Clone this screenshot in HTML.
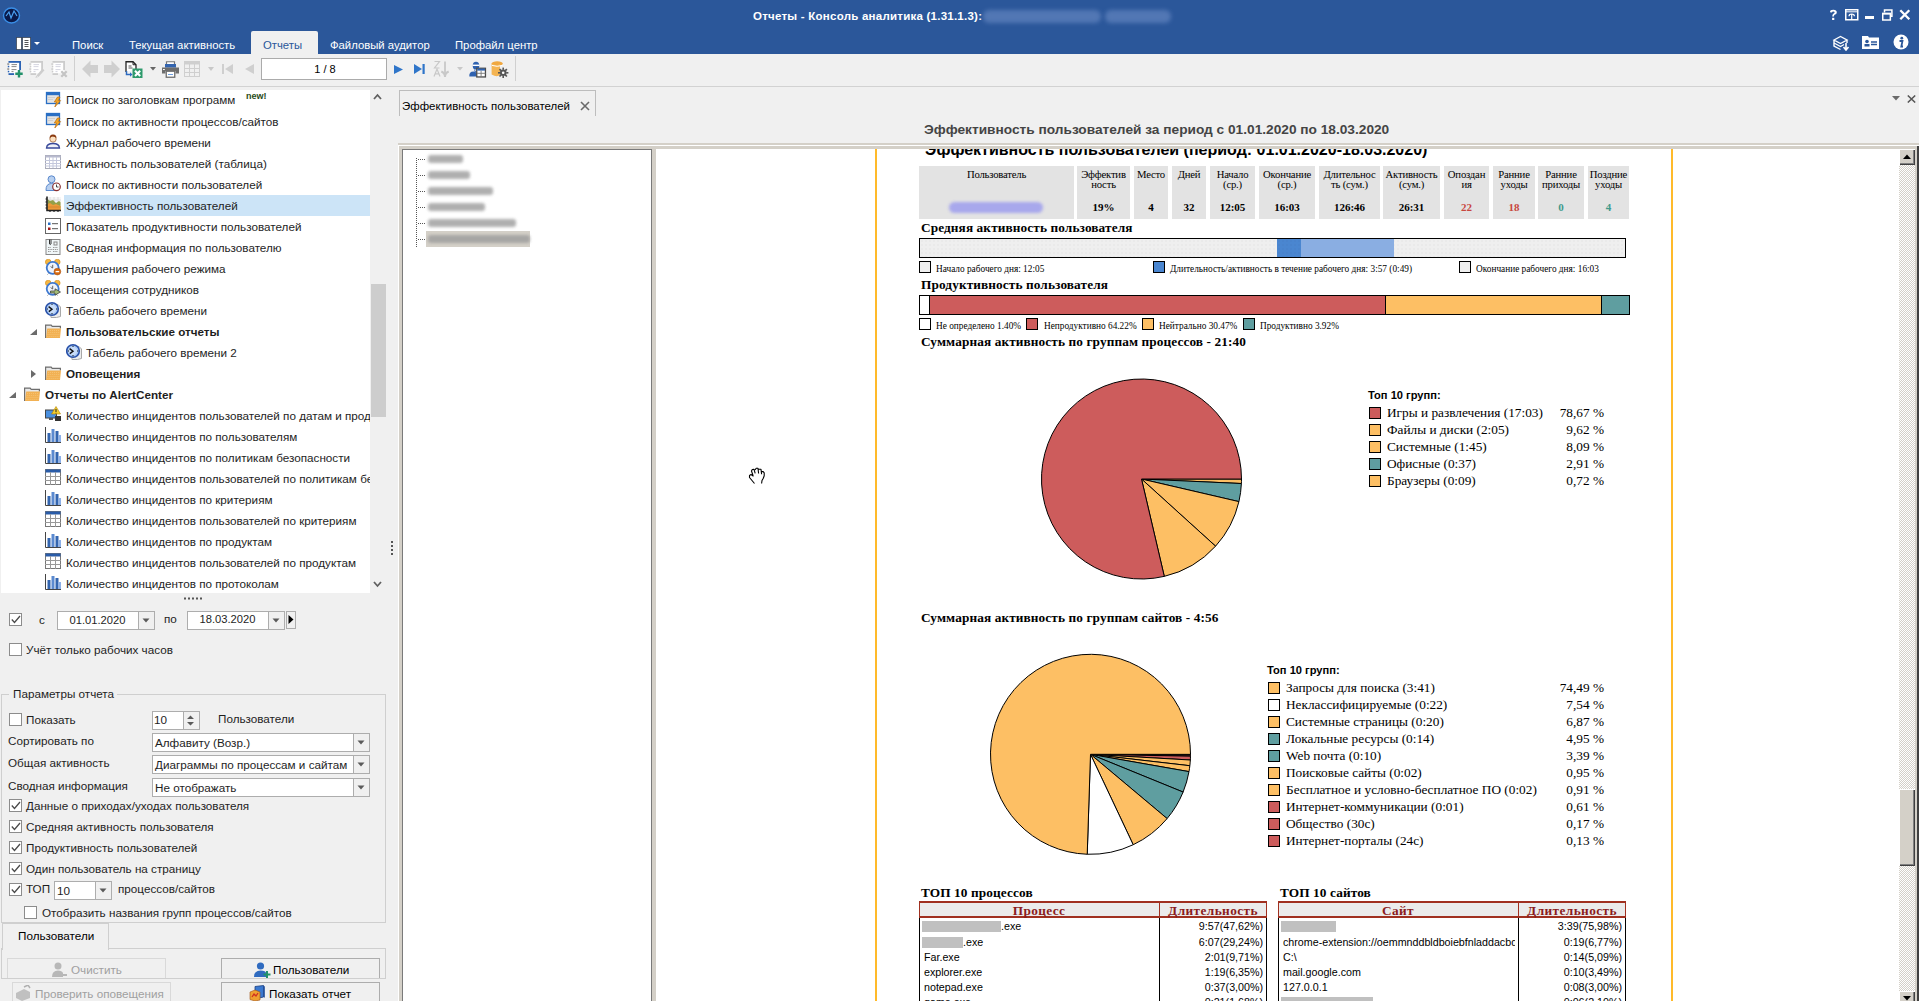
<!DOCTYPE html><html><head><meta charset="utf-8"><style>
html,body{margin:0;padding:0;width:1919px;height:1001px;overflow:hidden;background:#f0f0f0;}
body{position:relative;font-family:"Liberation Sans",sans-serif;}
div{position:absolute;white-space:pre;}
.ui{font-size:11.7px;line-height:14px;color:#1e1e1e;}
.mn{font-size:11.3px;line-height:14px;color:#fff;}
.sf{font-family:"Liberation Serif",serif;}
</style></head><body>
<div style="left:0px;top:0px;width:1919px;height:54px;background:#2b579a"></div><svg style="position:absolute;left:2px;top:7px;" width="19" height="17" viewBox="0 0 19 17"><ellipse cx="9.5" cy="8.5" rx="8" ry="7.5" fill="#0a1a4a" stroke="#3a8ee6" stroke-width="1.4"/><path d="M4 9 L7 5 L9 11 L12 4 L15 9" stroke="#4aa0f0" stroke-width="1.2" fill="none"/></svg><div style="left:753px;top:9px;font-size:11.5px;font-weight:bold;color:#fff;line-height:15px;letter-spacing:0.24px">Отчеты - Консоль аналитика (1.31.1.3):</div><div style="left:983px;top:10px;width:118px;height:13px;background:#5f82bd;border-radius:6px;filter:blur(2px);opacity:.75"></div><div style="left:1105px;top:10px;width:66px;height:13px;background:#5f82bd;border-radius:6px;filter:blur(2px);opacity:.75"></div><svg style="position:absolute;left:1829px;top:9px;" width="9" height="12" viewBox="0 0 9 12"><path d="M1 3.2 Q1 0.8 4.3 0.8 Q7.8 0.8 7.8 3.4 Q7.8 5 5.6 5.8 Q5 6.1 5 7.6 H3.2 Q3.2 5.4 4.6 4.6 Q5.6 4.1 5.6 3.3 Q5.6 2.4 4.3 2.4 Q3 2.4 3 3.6 Z" fill="#fff"/><rect x="3.1" y="8.8" width="2.2" height="2.2" fill="#fff"/></svg><svg style="position:absolute;left:1845px;top:9px;" width="14" height="12" viewBox="0 0 14 12"><rect x="0.75" y="0.75" width="12" height="10" stroke="#fff" stroke-width="1.5" fill="none"/><path d="M1 2.8 H13" stroke="#fff" stroke-width="1"/><path d="M4 7.2 Q4 5 6.7 5 Q9.4 5 9.4 7.2 M6.7 5 V11" stroke="#fff" stroke-width="1.2" fill="none"/></svg><div style="left:1865px;top:16px;width:9px;height:3px;background:#fff"></div><svg style="position:absolute;left:1882px;top:9px;" width="11" height="12" viewBox="0 0 11 12"><path d="M2.5 3.5 V0.9 H9.9 V7.2 H8.3" stroke="#fff" stroke-width="1.5" fill="none"/><rect x="0.75" y="4.4" width="7.6" height="6.6" stroke="#fff" stroke-width="1.5" fill="none"/><path d="M0.75 5 H8.3" stroke="#fff" stroke-width="1.2"/></svg><svg style="position:absolute;left:1899px;top:9px;" width="12" height="12" viewBox="0 0 12 12"><path d="M1.3 1.3 L10.3 10.3 M10.3 1.3 L1.3 10.3" stroke="#fff" stroke-width="2.3"/></svg><svg style="position:absolute;left:16px;top:37px;" width="25" height="13" viewBox="0 0 25 13"><rect x="0.5" y="0.5" width="5" height="12" fill="#fff" stroke="#111" stroke-dasharray="1 1"/><rect x="6.5" y="0.5" width="8" height="12" fill="#fff" stroke="#111" stroke-dasharray="1 1"/><path d="M8.5 3.5 H12.5 M8.5 5.5 H12.5 M8.5 7.5 H12.5 M8.5 9.5 H12.5" stroke="#555"/><path d="M18 5 L24 5 L21 8 Z" fill="#fff"/></svg><div style="left:251px;top:31px;width:67px;height:24px;background:#f0f0f0;border-radius:2px 2px 0 0"></div><div class="mn" style="left:72px;top:38px;color:#fff">Поиск</div><div class="mn" style="left:129px;top:38px;color:#fff">Текущая активность</div><div class="mn" style="left:263px;top:38px;color:#2b579a">Отчеты</div><div class="mn" style="left:330px;top:38px;color:#fff">Файловый аудитор</div><div class="mn" style="left:455px;top:38px;color:#fff">Профайл центр</div><svg style="position:absolute;left:1832px;top:34px;" width="18" height="17" viewBox="0 0 18 17"><path d="M2 6 L8.5 2.5 L15 6 L8.5 9.5 Z M2 6 V12 L8.5 15.5 M15 6 V9" stroke="#fff" stroke-width="1.4" fill="none"/><path d="M2 9 L8.5 12.5 L12 10.5" stroke="#fff" stroke-width="1.2" fill="none"/><path d="M14 9 V15 M11.5 13 L14 16 L16.5 13" stroke="#fff" stroke-width="1.6" fill="none"/></svg><svg style="position:absolute;left:1862px;top:36px;" width="17" height="13" viewBox="0 0 17 13"><path d="M0 0 H6 L7 1.5 H17 V13 H0 Z" fill="#fff"/><circle cx="5" cy="5.5" r="1.8" fill="#2b579a"/><rect x="2.5" y="8" width="5" height="2.5" fill="#2b579a"/><path d="M9 6 H15 M9 8.5 H15" stroke="#2b579a" stroke-width="1.3"/></svg><svg style="position:absolute;left:1893px;top:34px;" width="16" height="16" viewBox="0 0 16 16"><circle cx="8" cy="8" r="7.5" fill="#fff"/><circle cx="8.8" cy="4.2" r="1.4" fill="#2b579a"/><path d="M6.5 7 H9.5 L8.3 12.5 H10" stroke="#2b579a" stroke-width="1.8" fill="none"/></svg><div style="left:0px;top:86px;width:1919px;height:1px;background:#d2d2d2"></div><svg style="position:absolute;left:7px;top:61px;" width="17" height="17" viewBox="0 0 17 17"><rect x="2" y="1.2" width="10.5" height="11" fill="#fff"/><rect x="1.5" y="0" width="12.5" height="1.8" fill="#2a62b4"/><rect x="12.2" y="0" width="1.8" height="9" fill="#2a62b4"/><rect x="1.5" y="12.2" width="5.5" height="1.8" fill="#2a62b4"/><rect x="0.3" y="2.3" width="2" height="1.5" fill="#8a8a8a"/><rect x="0.8" y="4.8" width="1.5" height="1.5" fill="#2a62b4"/><rect x="0.3" y="7.3" width="2" height="1.5" fill="#8a8a8a"/><rect x="0.8" y="9.8" width="1.5" height="1.5" fill="#2a62b4"/><path d="M4.5 3.6 H10 M4.5 5.6 H9.5 M4.5 8.6 H9.5 M4.5 10.6 H6.5" stroke="#8a8a8a" stroke-width="1"/><path d="M12 9 V16.5 M8.3 12.8 H15.7" stroke="#22916a" stroke-width="2.4"/></svg><svg style="position:absolute;left:29px;top:61px;" width="17" height="17" viewBox="0 0 17 17"><rect x="2" y="1.2" width="10.5" height="11" fill="#fff"/><rect x="1.5" y="0" width="12.5" height="1.8" fill="#cccccc"/><rect x="12.2" y="0" width="1.8" height="9" fill="#cccccc"/><rect x="1.5" y="12.2" width="5.5" height="1.8" fill="#cccccc"/><rect x="0.3" y="2.3" width="2" height="1.5" fill="#cccccc"/><rect x="0.8" y="4.8" width="1.5" height="1.5" fill="#cccccc"/><rect x="0.3" y="7.3" width="2" height="1.5" fill="#cccccc"/><rect x="0.8" y="9.8" width="1.5" height="1.5" fill="#cccccc"/><path d="M4.5 3.6 H10 M4.5 5.6 H9.5 M4.5 8.6 H9.5 M4.5 10.6 H6.5" stroke="#d6d6e0" stroke-width="1"/><path d="M7.5 14.5 L13.5 7.5 L15.5 9.3 L9.5 16 Z" fill="#cdcdcd"/><path d="M6.3 16.8 L7.3 14.7 L9 16.2 Z" fill="#cdcdcd"/></svg><svg style="position:absolute;left:51px;top:61px;" width="17" height="17" viewBox="0 0 17 17"><rect x="2" y="1.2" width="10.5" height="11" fill="#fff"/><rect x="1.5" y="0" width="12.5" height="1.8" fill="#cccccc"/><rect x="12.2" y="0" width="1.8" height="9" fill="#cccccc"/><rect x="1.5" y="12.2" width="5.5" height="1.8" fill="#cccccc"/><rect x="0.3" y="2.3" width="2" height="1.5" fill="#cccccc"/><rect x="0.8" y="4.8" width="1.5" height="1.5" fill="#cccccc"/><rect x="0.3" y="7.3" width="2" height="1.5" fill="#cccccc"/><rect x="0.8" y="9.8" width="1.5" height="1.5" fill="#cccccc"/><path d="M4.5 3.6 H10 M4.5 5.6 H9.5 M4.5 8.6 H9.5 M4.5 10.6 H6.5" stroke="#d6d6e0" stroke-width="1"/><path d="M10.3 10.3 L15.7 15.7 M15.7 10.3 L10.3 15.7" stroke="#c4c4c4" stroke-width="2.2"/></svg><div style="left:74px;top:56px;width:1px;height:25px;background:#d0d0d0"></div><svg style="position:absolute;left:82px;top:60px;" width="16" height="18" viewBox="0 0 16 18"><path d="M0 9 L8.5 0.5 V5 H16 V13 H8.5 V17.5 Z" fill="#cfcfcf"/></svg><svg style="position:absolute;left:104px;top:60px;" width="16" height="18" viewBox="0 0 16 18"><path d="M16 9 L7.5 0.5 V5 H0 V13 H7.5 V17.5 Z" fill="#cfcfcf"/></svg><svg style="position:absolute;left:125px;top:61px;" width="18" height="17" viewBox="0 0 18 17"><path d="M1 11 V0.75 H8 L11 3.75 V8" stroke="#222" stroke-width="1.3" fill="#fff"/><path d="M8 0.75 V3.75 H11" stroke="#222" stroke-width="1" fill="none"/><path d="M3.5 5 H6.5 M3.5 7 H7.5" stroke="#444" stroke-width="0.9"/><rect x="7.5" y="7.5" width="10" height="9.5" fill="#2e9a6c"/><path d="M10 9.8 L15.2 15 M15.2 9.8 L10 15" stroke="#fff" stroke-width="2.1"/><path d="M1.5 10 V13.5 H5.5" stroke="#2f6bc0" stroke-width="1.5" fill="none"/><path d="M5 11.3 L7.5 13.5 L5 15.7 Z" fill="#2f6bc0"/></svg><svg style="position:absolute;left:150px;top:67px;" width="6" height="4" viewBox="0 0 6 4"><path d="M0 0 H6 L3 3.5 Z" fill="#666"/></svg><svg style="position:absolute;left:162px;top:61px;" width="17" height="17" viewBox="0 0 17 17"><path d="M4.5 4.5 V0.75 H12.5 V4.5" stroke="#777" stroke-width="1.2" fill="#fff"/><rect x="3" y="3" width="11" height="3.6" fill="#3465b0"/><path d="M0 6.5 H17 V12.5 H13.5 V10 H3.5 V12.5 H0 Z" fill="#6e6e6e"/><rect x="1" y="8" width="1.8" height="1" fill="#fff"/><rect x="4.25" y="10.25" width="8.5" height="6" fill="#fff" stroke="#6e6e6e" stroke-width="1.3"/><path d="M6 13.5 H11" stroke="#6c9ee0" stroke-width="1"/></svg><svg style="position:absolute;left:184px;top:61px;" width="16" height="16" viewBox="0 0 16 16"><rect x="0.5" y="0.5" width="15" height="15" fill="none" stroke="#cfcfcf"/><rect x="0.5" y="0.5" width="15" height="3" fill="#cfcfcf"/><path d="M5.5 3 V16 M10.5 3 V16 M0 7.5 H16 M0 11.5 H16" stroke="#cfcfcf"/></svg><svg style="position:absolute;left:208px;top:67px;" width="6" height="4" viewBox="0 0 6 4"><path d="M0 0 H6 L3 4 Z" fill="#c8c8c8"/></svg><svg style="position:absolute;left:222px;top:64px;" width="11" height="10" viewBox="0 0 11 10"><rect x="0" y="0" width="2" height="10" fill="#cfcfcf"/><path d="M11 0 V10 L3 5 Z" fill="#cfcfcf"/></svg><svg style="position:absolute;left:245px;top:64px;" width="9" height="10" viewBox="0 0 9 10"><path d="M9 0 V10 L0 5 Z" fill="#cfcfcf"/></svg><div style="left:261px;top:58px;width:124px;height:20px;background:#fff;border:1px solid #ababab"></div><div style="left:262px;top:62px;width:126px;text-align:center;color:#000;font-size:11px;line-height:14px">1 / 8</div><svg style="position:absolute;left:394px;top:65px;" width="9" height="9" viewBox="0 0 9 9"><path d="M0 0 V9 L9 4.5 Z" fill="#2f75c9"/></svg><svg style="position:absolute;left:414px;top:64px;" width="11" height="10" viewBox="0 0 11 10"><path d="M0 0 V10 L8 5 Z" fill="#2f75c9"/><rect x="8.5" y="0" width="2.2" height="10" fill="#2f75c9"/></svg><svg style="position:absolute;left:433px;top:60px;" width="18" height="18" viewBox="0 0 18 18"><path d="M1.5 1.5 H6.5 L1.5 8 H6.5" stroke="#c8c8c8" stroke-width="1.2" fill="none"/><path d="M1 16.5 L4 9 L7 16.5 M2.2 13.8 H5.8" stroke="#c8c8c8" stroke-width="1.2" fill="none"/><path d="M12 1.5 V16" stroke="#c8c8c8" stroke-width="1.8"/><path d="M8.3 11.5 Q12 13 12 17 Q12 13 15.7 11.5" stroke="#c8c8c8" stroke-width="2" fill="none"/></svg><svg style="position:absolute;left:457px;top:67px;" width="6" height="4" viewBox="0 0 6 4"><path d="M0 0 H6 L3 3.5 Z" fill="#c8c8c8"/></svg><svg style="position:absolute;left:469px;top:61px;" width="18" height="17" viewBox="0 0 18 17"><path d="M3.7 5 Q3.7 0.8 7 0.8 Q10.3 0.8 10.3 5 Q10.3 7.5 8.8 8.5 H5.2 Q3.7 7.5 3.7 5 Z" fill="#2f62b0"/><rect x="3.5" y="3.6" width="7" height="1.4" fill="#fff"/><path d="M5.8 9 V10.5 H7.5" stroke="#2f62b0" stroke-width="0.8" fill="none"/><path d="M0.3 15.5 Q0 10.5 4.5 10.5 Q7 10.5 7.5 12 V15.5 Z" fill="#2f62b0"/><rect x="7.75" y="7.25" width="8.7" height="8.7" fill="#fff" stroke="#4a4a4a" stroke-width="1.3"/><rect x="8.2" y="7.6" width="7.8" height="2" fill="#2f62b0"/><path d="M8 12.3 H16.5 M12.1 9.8 V16" stroke="#777" stroke-width="0.9"/></svg><svg style="position:absolute;left:491px;top:61px;" width="18" height="17" viewBox="0 0 18 17"><ellipse cx="6.2" cy="2.6" rx="5.6" ry="2.3" fill="#f0a840"/><path d="M0.6 2.8 V13.5 Q6 16.5 9 14 V2.8 Q6 5.5 0.6 2.8 Z" fill="#f4b452"/><path d="M1 4.4 Q6 6.2 11.6 4.4" stroke="#fff" stroke-width="1" fill="none"/><circle cx="12.2" cy="11.8" r="3.3" fill="#555"/><rect x="11.4" y="6.6" width="1.6" height="2.2" fill="#555" transform="rotate(0 12.2 11.8)"/><rect x="11.4" y="6.6" width="1.6" height="2.2" fill="#555" transform="rotate(45 12.2 11.8)"/><rect x="11.4" y="6.6" width="1.6" height="2.2" fill="#555" transform="rotate(90 12.2 11.8)"/><rect x="11.4" y="6.6" width="1.6" height="2.2" fill="#555" transform="rotate(135 12.2 11.8)"/><rect x="11.4" y="6.6" width="1.6" height="2.2" fill="#555" transform="rotate(180 12.2 11.8)"/><rect x="11.4" y="6.6" width="1.6" height="2.2" fill="#555" transform="rotate(225 12.2 11.8)"/><rect x="11.4" y="6.6" width="1.6" height="2.2" fill="#555" transform="rotate(270 12.2 11.8)"/><rect x="11.4" y="6.6" width="1.6" height="2.2" fill="#555" transform="rotate(315 12.2 11.8)"/><circle cx="12.2" cy="11.8" r="1.3" fill="#fff"/></svg><div style="left:515px;top:56px;width:1px;height:25px;background:#d0d0d0"></div><div style="left:1px;top:90px;width:369px;height:503px;background:#fff"></div><div style="left:64px;top:195px;width:306px;height:21px;background:#cce4f7"></div><div style="left:1px;top:90px;width:369px;height:503px;overflow:hidden"><svg style="position:absolute;left:44px;top:1px;" width="17" height="17" viewBox="0 0 17 17"><rect x="1.5" y="1.5" width="13" height="11" fill="#e4e4e4" stroke="#2a6fc4" stroke-width="1.3"/><rect x="2" y="2" width="12" height="2.2" fill="#2a6fc4"/><path d="M3 6.5 H10 M3 8.5 H8" stroke="#cfcfcf" stroke-width="1"/><path d="M12.5 6 L9.3 11 H11.6 L9.8 16 L15.6 9.6 H13.2 L15 6 Z" fill="#f5a623" stroke="#b86b10" stroke-width="0.7"/></svg><div class="ui" style="left:65px;top:3px;">Поиск по заголовкам программ</div><svg style="position:absolute;left:44px;top:22px;" width="17" height="17" viewBox="0 0 17 17"><rect x="1.5" y="1.5" width="13" height="11" fill="#e4e4e4" stroke="#2a6fc4" stroke-width="1.3"/><rect x="2" y="2" width="12" height="2.2" fill="#2a6fc4"/><path d="M3 6.5 H10 M3 8.5 H8" stroke="#cfcfcf" stroke-width="1"/><path d="M12.5 6 L9.3 11 H11.6 L9.8 16 L15.6 9.6 H13.2 L15 6 Z" fill="#f5a623" stroke="#b86b10" stroke-width="0.7"/></svg><div class="ui" style="left:65px;top:25px;">Поиск по активности процессов/сайтов</div><svg style="position:absolute;left:44px;top:43px;" width="17" height="17" viewBox="0 0 17 17"><circle cx="8" cy="6" r="3.2" fill="#fbe0c0" stroke="#9a5a2a" stroke-width="0.7"/><path d="M4.6 5.5 Q4.5 1.5 8 1.6 Q11.6 1.5 11.4 5.2 Q10 3.2 7 3.6 Q5.5 4 4.6 5.5 Z" fill="#8a3a10"/><path d="M1.5 15 Q1.8 10.5 8 10.5 Q14.2 10.5 14.5 15 Z" fill="#eef0f8" stroke="#3a4a9a" stroke-width="1.3"/></svg><div class="ui" style="left:65px;top:46px;">Журнал рабочего времени</div><svg style="position:absolute;left:44px;top:64px;" width="17" height="17" viewBox="0 0 17 17"><rect x="0.5" y="1.5" width="15" height="13" fill="#fff" stroke="#a8aab8"/><rect x="0.5" y="1.5" width="15" height="2" fill="#b8bace"/><path d="M4.5 3 V14 M8 3 V14 M11.5 3 V14 M0 6.5 H16 M0 9.5 H16 M0 12 H16" stroke="#c4c8dc"/></svg><div class="ui" style="left:65px;top:67px;">Активность пользователей (таблица)</div><svg style="position:absolute;left:44px;top:85px;" width="17" height="17" viewBox="0 0 17 17"><circle cx="6.5" cy="4.3" r="3.5" fill="#b8d0f0" stroke="#5a88cc" stroke-width="1"/><path d="M1 15.5 Q0.8 8.5 6.5 8.5 Q12 8.5 12 15.5 Z" fill="#b8d0f0" stroke="#5a88cc" stroke-width="1"/><circle cx="11.5" cy="11.8" r="3.8" fill="#fff" stroke="#8a3030" stroke-width="1.2"/><path d="M11.5 9.5 V12 H13.5" stroke="#333" stroke-width="0.9" fill="none"/></svg><div class="ui" style="left:65px;top:88px;">Поиск по активности пользователей</div><svg style="position:absolute;left:44px;top:106px;" width="17" height="17" viewBox="0 0 17 17"><rect x="1" y="1" width="15" height="14" fill="#f6f6f6"/><path d="M5 1 V14 M9 1 V14 M13 1 V14 M2 4 H16 M2 8 H16" stroke="#d8d8d8" stroke-width="0.8"/><path d="M2.5 3 L5 5 L8 4 L11 7 L14 5 L15.5 6 V14 H2.5 Z" fill="#93a048"/><path d="M2.5 8 L5 7 L8 9 L11 8 L15.5 10 V14 H2.5 Z" fill="#ec9a3a"/><path d="M2.5 11 H15.5" stroke="#c87828" stroke-width="0.6"/><path d="M2 0.5 V14.5 H16" stroke="#222" stroke-width="1.6" fill="none"/><path d="M0.5 3 H2 M0.5 6 H2 M0.5 9 H2 M0.5 12 H2 M5 16 V14.5 M9 16 V14.5 M13 16 V14.5" stroke="#222" stroke-width="1.2"/></svg><div class="ui" style="left:65px;top:109px;">Эффективность пользователей</div><svg style="position:absolute;left:44px;top:128px;" width="17" height="17" viewBox="0 0 17 17"><rect x="0.5" y="0.5" width="15" height="15" fill="#fff" stroke="#666"/><rect x="3" y="4.5" width="2.5" height="2.5" fill="#2a6fc4"/><rect x="3" y="9.5" width="2.5" height="2.5" fill="#a01818"/><path d="M7 5.7 H13 M7 10.7 H13" stroke="#555" stroke-width="1"/></svg><div class="ui" style="left:65px;top:130px;">Показатель продуктивности пользователей</div><svg style="position:absolute;left:44px;top:149px;" width="17" height="17" viewBox="0 0 17 17"><rect x="1" y="0.5" width="14" height="15" fill="#f0f6f8" stroke="#888"/><path d="M4.5 0.5 V5 Q5.3 6 6 5 V0.5" stroke="#333" fill="none"/><rect x="9" y="3" width="3" height="3" fill="none" stroke="#888"/><path d="M3 8.5 H6 M8 8.5 H13 M3 10.5 H13 M3 12.5 H6 M8 12.5 H13" stroke="#999" stroke-dasharray="1.5 0.8"/></svg><div class="ui" style="left:65px;top:151px;">Сводная информация по пользователю</div><svg style="position:absolute;left:44px;top:169px;" width="17" height="17" viewBox="0 0 17 17"><circle cx="3.2" cy="3" r="2.8" fill="#f6b640" stroke="#d08a18" stroke-width="0.6"/><circle cx="12.3" cy="3" r="2.8" fill="#f6b640" stroke="#d08a18" stroke-width="0.6"/><path d="M3.5 14.5 L2.5 15.5 M11.5 14.5 L12.5 15.5" stroke="#888" stroke-width="1"/><circle cx="7.7" cy="8.8" r="6" fill="#eef3fb" stroke="#3d78d0" stroke-width="1.8"/><path d="M7.7 5.8 V9 L5.6 7.6" stroke="#555" stroke-width="0.9" fill="none"/><circle cx="12.4" cy="12.6" r="3.4" fill="#d66a12" stroke="#a04a08" stroke-width="0.5"/><path d="M10.6 12.6 H14.2" stroke="#fff" stroke-width="1.3"/></svg><div class="ui" style="left:65px;top:172px;">Нарушения рабочего режима</div><svg style="position:absolute;left:44px;top:190px;" width="17" height="17" viewBox="0 0 17 17"><circle cx="3.2" cy="3" r="2.8" fill="#f6b640" stroke="#d08a18" stroke-width="0.6"/><circle cx="12.3" cy="3" r="2.8" fill="#f6b640" stroke="#d08a18" stroke-width="0.6"/><path d="M3.5 14.5 L2.5 15.5 M11.5 14.5 L12.5 15.5" stroke="#888" stroke-width="1"/><circle cx="7.7" cy="8.8" r="6" fill="#eef3fb" stroke="#3d78d0" stroke-width="1.8"/><path d="M7.7 5.8 V9 L5.6 7.6" stroke="#555" stroke-width="0.9" fill="none"/><path d="M5.5 11 H10 V8.8 L15.5 12 L10 15.2 V13 H5.5 Z" fill="#a4bc78" stroke="#303030" stroke-width="0.7"/></svg><div class="ui" style="left:65px;top:193px;">Посещения сотрудников</div><svg style="position:absolute;left:44px;top:211px;" width="17" height="17" viewBox="0 0 17 17"><g transform="translate(0 1)"><path d="M5 2.5 H13 L15.5 5 V14.5 Q12 16 6 15.5 Z" fill="#ececec" stroke="#a8a8a8"/><circle cx="7" cy="7" r="6.3" fill="#a8c8f4" stroke="#2850a8" stroke-width="1.6"/><circle cx="7" cy="7" r="4.2" fill="#c8dcf8"/><path d="M3.6 4.6 L7 7.2 L3.8 9.6" stroke="#111" stroke-width="1.4" fill="none"/><path d="M7 1.8 V3 M12.2 7 H11 M7 12.2 V11 M1.8 7 H3" stroke="#111" stroke-width="0.9"/></g></svg><div class="ui" style="left:65px;top:214px;">Табель рабочего времени</div><svg style="position:absolute;left:44px;top:232px;" width="17" height="17" viewBox="0 0 17 17"><g transform="translate(0 2.5)"><path d="M0.6 13.5 V0.6 H6.2 L7.2 1.8 H15.4 V4" stroke="#6e6e6e" stroke-width="1.2" fill="#e8e8e8"/><path d="M2.2 4 H16 L15 13.5 H1 Z" fill="#f2b153"/><path d="M3 6 H15 M2.8 8 H15 M2.5 10 H14.8 M2.3 12 H14.8" stroke="#f7c880" stroke-width="0.7" stroke-dasharray="1 1"/></g></svg><div class="ui" style="left:65px;top:235px;font-weight:bold;">Пользовательские отчеты</div><svg style="position:absolute;left:65px;top:253px;" width="17" height="17" viewBox="0 0 17 17"><g transform="translate(0 1)"><path d="M5 2.5 H13 L15.5 5 V14.5 Q12 16 6 15.5 Z" fill="#ececec" stroke="#a8a8a8"/><circle cx="7" cy="7" r="6.3" fill="#a8c8f4" stroke="#2850a8" stroke-width="1.6"/><circle cx="7" cy="7" r="4.2" fill="#c8dcf8"/><path d="M3.6 4.6 L7 7.2 L3.8 9.6" stroke="#111" stroke-width="1.4" fill="none"/><path d="M7 1.8 V3 M12.2 7 H11 M7 12.2 V11 M1.8 7 H3" stroke="#111" stroke-width="0.9"/></g></svg><div class="ui" style="left:85px;top:256px;">Табель рабочего времени 2</div><svg style="position:absolute;left:44px;top:274px;" width="17" height="17" viewBox="0 0 17 17"><g transform="translate(0 2.5)"><path d="M0.6 13.5 V0.6 H6.2 L7.2 1.8 H15.4 V4" stroke="#6e6e6e" stroke-width="1.2" fill="#e8e8e8"/><path d="M2.2 4 H16 L15 13.5 H1 Z" fill="#f2b153"/><path d="M3 6 H15 M2.8 8 H15 M2.5 10 H14.8 M2.3 12 H14.8" stroke="#f7c880" stroke-width="0.7" stroke-dasharray="1 1"/></g></svg><div class="ui" style="left:65px;top:277px;font-weight:bold;">Оповещения</div><svg style="position:absolute;left:23px;top:295px;" width="17" height="17" viewBox="0 0 17 17"><g transform="translate(0 2.5)"><path d="M0.6 13.5 V0.6 H6.2 L7.2 1.8 H15.4 V4" stroke="#6e6e6e" stroke-width="1.2" fill="#e8e8e8"/><path d="M2.2 4 H16 L15 13.5 H1 Z" fill="#f2b153"/><path d="M3 6 H15 M2.8 8 H15 M2.5 10 H14.8 M2.3 12 H14.8" stroke="#f7c880" stroke-width="0.7" stroke-dasharray="1 1"/></g></svg><div class="ui" style="left:44px;top:298px;font-weight:bold;">Отчеты по AlertCenter</div><svg style="position:absolute;left:44px;top:316px;" width="17" height="17" viewBox="0 0 17 17"><rect x="0.5" y="4" width="11" height="8" fill="#4a90e0" stroke="#444" stroke-width="1"/><rect x="4" y="12" width="4" height="2" fill="#555"/><rect x="10" y="10" width="6" height="5" fill="#333"/><path d="M11 0.5 L15.5 8 H6.5 Z" fill="#f6d030" stroke="#b08000" stroke-width="0.6"/><path d="M11 3 V6 M11 6.8 V7.5" stroke="#222" stroke-width="1"/></svg><div class="ui" style="left:65px;top:319px;">Количество инцидентов пользователей по датам и продуктам</div><svg style="position:absolute;left:44px;top:337px;" width="17" height="17" viewBox="0 0 17 17"><path d="M0.5 0 V15.5 H16" stroke="#444" stroke-width="1" fill="none"/><rect x="2.5" y="6" width="3" height="9" fill="#3466b0"/><rect x="6.5" y="2" width="3" height="13" fill="#5b8ad0"/><rect x="10.5" y="4" width="3" height="11" fill="#3466b0"/><rect x="13.5" y="8" width="2.5" height="7" fill="#8cb0e8"/></svg><div class="ui" style="left:65px;top:340px;">Количество инцидентов по пользователям</div><svg style="position:absolute;left:44px;top:358px;" width="17" height="17" viewBox="0 0 17 17"><path d="M0.5 0 V15.5 H16" stroke="#444" stroke-width="1" fill="none"/><rect x="2.5" y="6" width="3" height="9" fill="#3466b0"/><rect x="6.5" y="2" width="3" height="13" fill="#5b8ad0"/><rect x="10.5" y="4" width="3" height="11" fill="#3466b0"/><rect x="13.5" y="8" width="2.5" height="7" fill="#8cb0e8"/></svg><div class="ui" style="left:65px;top:361px;">Количество инцидентов по политикам безопасности</div><svg style="position:absolute;left:44px;top:379px;" width="17" height="17" viewBox="0 0 17 17"><rect x="0.5" y="0.5" width="15" height="15" fill="#fff" stroke="#777"/><rect x="0.5" y="0.5" width="15" height="3" fill="#2a5ca8"/><path d="M5.5 3 V16 M10.5 3 V16 M0 7.5 H16 M0 11.5 H16" stroke="#999"/></svg><div class="ui" style="left:65px;top:382px;">Количество инцидентов пользователей по политикам безопасности</div><svg style="position:absolute;left:44px;top:400px;" width="17" height="17" viewBox="0 0 17 17"><path d="M0.5 0 V15.5 H16" stroke="#444" stroke-width="1" fill="none"/><rect x="2.5" y="6" width="3" height="9" fill="#3466b0"/><rect x="6.5" y="2" width="3" height="13" fill="#5b8ad0"/><rect x="10.5" y="4" width="3" height="11" fill="#3466b0"/><rect x="13.5" y="8" width="2.5" height="7" fill="#8cb0e8"/></svg><div class="ui" style="left:65px;top:403px;">Количество инцидентов по критериям</div><svg style="position:absolute;left:44px;top:421px;" width="17" height="17" viewBox="0 0 17 17"><rect x="0.5" y="0.5" width="15" height="15" fill="#fff" stroke="#777"/><rect x="0.5" y="0.5" width="15" height="3" fill="#2a5ca8"/><path d="M5.5 3 V16 M10.5 3 V16 M0 7.5 H16 M0 11.5 H16" stroke="#999"/></svg><div class="ui" style="left:65px;top:424px;">Количество инцидентов пользователей по критериям</div><svg style="position:absolute;left:44px;top:442px;" width="17" height="17" viewBox="0 0 17 17"><path d="M0.5 0 V15.5 H16" stroke="#444" stroke-width="1" fill="none"/><rect x="2.5" y="6" width="3" height="9" fill="#3466b0"/><rect x="6.5" y="2" width="3" height="13" fill="#5b8ad0"/><rect x="10.5" y="4" width="3" height="11" fill="#3466b0"/><rect x="13.5" y="8" width="2.5" height="7" fill="#8cb0e8"/></svg><div class="ui" style="left:65px;top:445px;">Количество инцидентов по продуктам</div><svg style="position:absolute;left:44px;top:463px;" width="17" height="17" viewBox="0 0 17 17"><rect x="0.5" y="0.5" width="15" height="15" fill="#fff" stroke="#777"/><rect x="0.5" y="0.5" width="15" height="3" fill="#2a5ca8"/><path d="M5.5 3 V16 M10.5 3 V16 M0 7.5 H16 M0 11.5 H16" stroke="#999"/></svg><div class="ui" style="left:65px;top:466px;">Количество инцидентов пользователей по продуктам</div><svg style="position:absolute;left:44px;top:484px;" width="17" height="17" viewBox="0 0 17 17"><path d="M0.5 0 V15.5 H16" stroke="#444" stroke-width="1" fill="none"/><rect x="2.5" y="6" width="3" height="9" fill="#3466b0"/><rect x="6.5" y="2" width="3" height="13" fill="#5b8ad0"/><rect x="10.5" y="4" width="3" height="11" fill="#3466b0"/><rect x="13.5" y="8" width="2.5" height="7" fill="#8cb0e8"/></svg><div class="ui" style="left:65px;top:487px;">Количество инцидентов по протоколам</div></div><svg style="position:absolute;left:30px;top:329px;" width="7" height="6" viewBox="0 0 7 6"><path d="M7 0 V6 H0 Z" fill="#6b6b6b"/></svg><svg style="position:absolute;left:31px;top:370px;" width="5" height="8" viewBox="0 0 5 8"><path d="M0 0 L5 4 L0 8 Z" fill="#6b6b6b"/></svg><svg style="position:absolute;left:9px;top:392px;" width="7" height="6" viewBox="0 0 7 6"><path d="M7 0 V6 H0 Z" fill="#6b6b6b"/></svg><div style="left:246px;top:91px;font-size:9px;font-weight:bold;color:#2a4a18;line-height:10px">new!</div><div style="left:371px;top:284px;width:15px;height:133px;background:#cdcdcd"></div><svg style="position:absolute;left:373px;top:93px;" width="9" height="7" viewBox="0 0 9 7"><path d="M1 6 L4.5 2 L8 6" stroke="#606060" stroke-width="1.8" fill="none"/></svg><svg style="position:absolute;left:373px;top:581px;" width="9" height="7" viewBox="0 0 9 7"><path d="M1 1 L4.5 5 L8 1" stroke="#606060" stroke-width="1.8" fill="none"/></svg><svg style="position:absolute;left:183px;top:597px;" width="20" height="4" viewBox="0 0 20 4"><rect x="1" y="0.5" width="2" height="2" fill="#555"/><rect x="5" y="0.5" width="2" height="2" fill="#555"/><rect x="9" y="0.5" width="2" height="2" fill="#555"/><rect x="13" y="0.5" width="2" height="2" fill="#555"/><rect x="17" y="0.5" width="2" height="2" fill="#555"/></svg><svg style="position:absolute;left:390px;top:540px;" width="4" height="17" viewBox="0 0 4 17"><rect x="1" y="1" width="2" height="2" fill="#555"/><rect x="1" y="5" width="2" height="2" fill="#555"/><rect x="1" y="9" width="2" height="2" fill="#555"/><rect x="1" y="13" width="2" height="2" fill="#555"/></svg><div style="left:9px;top:613px;width:11px;height:11px;background:#fff;border:1px solid #8c8c8c"></div><svg style="position:absolute;left:11px;top:615px;" width="10" height="9" viewBox="0 0 10 9"><path d="M0.8 4.5 L3.5 7.5 L9 1" stroke="#4a4a4a" stroke-width="1.3" fill="none"/></svg><div class="ui" style="left:39px;top:613px;">с</div><div style="left:57px;top:611px;width:96px;height:17px;background:#fff;border:1px solid #adadad"></div><div style="left:138px;top:612px;width:15px;height:17px;background:#f0f0f0;border-left:1px solid #adadad"></div><svg style="position:absolute;left:142px;top:618px;" width="8" height="5" viewBox="0 0 8 5"><path d="M0.5 0.5 H7.5 L4 4.5 Z" fill="#5a5a5a"/></svg><div class="ui" style="left:57px;top:613px;width:81px;text-align:center;font-size:11.2px">01.01.2020</div><div class="ui" style="left:164px;top:612px;">по</div><div style="left:187px;top:611px;width:96px;height:17px;background:#fff;border:1px solid #adadad"></div><div style="left:268px;top:612px;width:15px;height:17px;background:#f0f0f0;border-left:1px solid #adadad"></div><svg style="position:absolute;left:272px;top:618px;" width="8" height="5" viewBox="0 0 8 5"><path d="M0.5 0.5 H7.5 L4 4.5 Z" fill="#5a5a5a"/></svg><div class="ui" style="left:187px;top:612px;width:81px;text-align:center;font-size:11.2px">18.03.2020</div><div style="left:286px;top:611px;width:8px;height:16px;background:#f0f0f0;border:1px solid #adadad"></div><svg style="position:absolute;left:288px;top:615px;" width="6" height="9" viewBox="0 0 6 9"><path d="M0.5 0 V9 L5.5 4.5 Z" fill="#000"/></svg><div style="left:9px;top:643px;width:11px;height:11px;background:#fff;border:1px solid #8c8c8c"></div><div class="ui" style="left:26px;top:643px;">Учёт только рабочих часов</div><div style="left:1px;top:694px;width:383px;height:227px;border:1px solid #cfcfcf"></div><div style="left:9px;top:688px;width:108px;height:12px;background:#f0f0f0"></div><div class="ui" style="left:13px;top:687px;">Параметры отчета</div><div style="left:9px;top:713px;width:11px;height:11px;background:#fff;border:1px solid #8c8c8c"></div><div class="ui" style="left:26px;top:713px;">Показать</div><div style="left:152px;top:711px;width:46px;height:17px;background:#fff;border:1px solid #adadad"></div><div style="left:183px;top:712px;width:15px;height:17px;background:#f0f0f0;border-left:1px solid #adadad"></div><svg style="position:absolute;left:186px;top:714px;" width="9" height="13" viewBox="0 0 9 13"><path d="M1 5 L4.5 1.5 L8 5 Z M1 8 L4.5 11.5 L8 8 Z" fill="#5a5a5a"/></svg><div class="ui" style="left:154px;top:713px;">10</div><div class="ui" style="left:218px;top:712px;">Пользователи</div><div class="ui" style="left:8px;top:734px;">Сортировать по</div><div style="left:152px;top:733px;width:216px;height:17px;background:#fff;border:1px solid #adadad"></div><div style="left:353px;top:734px;width:15px;height:17px;background:#f0f0f0;border-left:1px solid #adadad"></div><svg style="position:absolute;left:357px;top:740px;" width="8" height="5" viewBox="0 0 8 5"><path d="M0.5 0.5 H7.5 L4 4.5 Z" fill="#5a5a5a"/></svg><div class="ui" style="left:155px;top:736px;">Алфавиту (Возр.)</div><div class="ui" style="left:8px;top:756px;">Общая активность</div><div style="left:152px;top:755px;width:216px;height:17px;background:#fff;border:1px solid #adadad"></div><div style="left:353px;top:756px;width:15px;height:17px;background:#f0f0f0;border-left:1px solid #adadad"></div><svg style="position:absolute;left:357px;top:762px;" width="8" height="5" viewBox="0 0 8 5"><path d="M0.5 0.5 H7.5 L4 4.5 Z" fill="#5a5a5a"/></svg><div class="ui" style="left:155px;top:758px;">Диаграммы по процессам и сайтам</div><div class="ui" style="left:8px;top:779px;">Сводная информация</div><div style="left:152px;top:778px;width:216px;height:17px;background:#fff;border:1px solid #adadad"></div><div style="left:353px;top:779px;width:15px;height:17px;background:#f0f0f0;border-left:1px solid #adadad"></div><svg style="position:absolute;left:357px;top:785px;" width="8" height="5" viewBox="0 0 8 5"><path d="M0.5 0.5 H7.5 L4 4.5 Z" fill="#5a5a5a"/></svg><div class="ui" style="left:155px;top:781px;">Не отображать</div><div style="left:9px;top:799px;width:11px;height:11px;background:#fff;border:1px solid #8c8c8c"></div><svg style="position:absolute;left:11px;top:801px;" width="10" height="9" viewBox="0 0 10 9"><path d="M0.8 4.5 L3.5 7.5 L9 1" stroke="#4a4a4a" stroke-width="1.3" fill="none"/></svg><div class="ui" style="left:26px;top:799px;">Данные о приходах/уходах пользователя</div><div style="left:9px;top:820px;width:11px;height:11px;background:#fff;border:1px solid #8c8c8c"></div><svg style="position:absolute;left:11px;top:822px;" width="10" height="9" viewBox="0 0 10 9"><path d="M0.8 4.5 L3.5 7.5 L9 1" stroke="#4a4a4a" stroke-width="1.3" fill="none"/></svg><div class="ui" style="left:26px;top:820px;">Средняя активность пользователя</div><div style="left:9px;top:841px;width:11px;height:11px;background:#fff;border:1px solid #8c8c8c"></div><svg style="position:absolute;left:11px;top:843px;" width="10" height="9" viewBox="0 0 10 9"><path d="M0.8 4.5 L3.5 7.5 L9 1" stroke="#4a4a4a" stroke-width="1.3" fill="none"/></svg><div class="ui" style="left:26px;top:841px;">Продуктивность пользователей</div><div style="left:9px;top:862px;width:11px;height:11px;background:#fff;border:1px solid #8c8c8c"></div><svg style="position:absolute;left:11px;top:864px;" width="10" height="9" viewBox="0 0 10 9"><path d="M0.8 4.5 L3.5 7.5 L9 1" stroke="#4a4a4a" stroke-width="1.3" fill="none"/></svg><div class="ui" style="left:26px;top:862px;">Один пользователь на страницу</div><div style="left:9px;top:883px;width:11px;height:11px;background:#fff;border:1px solid #8c8c8c"></div><svg style="position:absolute;left:11px;top:885px;" width="10" height="9" viewBox="0 0 10 9"><path d="M0.8 4.5 L3.5 7.5 L9 1" stroke="#4a4a4a" stroke-width="1.3" fill="none"/></svg><div class="ui" style="left:26px;top:882px;">ТОП</div><div style="left:54px;top:881px;width:56px;height:17px;background:#fff;border:1px solid #adadad"></div><div style="left:95px;top:882px;width:15px;height:17px;background:#f0f0f0;border-left:1px solid #adadad"></div><svg style="position:absolute;left:99px;top:888px;" width="8" height="5" viewBox="0 0 8 5"><path d="M0.5 0.5 H7.5 L4 4.5 Z" fill="#5a5a5a"/></svg><div class="ui" style="left:57px;top:884px;">10</div><div class="ui" style="left:118px;top:882px;">процессов/сайтов</div><div style="left:24px;top:906px;width:11px;height:11px;background:#fff;border:1px solid #8c8c8c"></div><div class="ui" style="left:42px;top:906px;">Отобразить названия групп процессов/сайтов</div><div style="left:1px;top:948px;width:383px;height:29px;border:1px solid #cfcfcf;border-top-color:#cfcfcf"></div><div style="left:2px;top:923px;width:105px;height:26px;background:#f0f0f0;border:1px solid #cfcfcf;border-bottom:none"></div><div class="ui" style="left:18px;top:929px;color:#000">Пользователи</div><div style="left:7px;top:958px;width:157px;height:19px;background:#f0f0f0;border:1px solid #d9d9d9;border-bottom:none"></div><svg style="position:absolute;left:52px;top:962px;" width="16" height="16" viewBox="0 0 16 16"><circle cx="6" cy="4" r="3.5" fill="#b8b8b8"/><path d="M0 15 Q0 8.5 6 8.5 Q10 8.5 11 11 V15 Z" fill="#b8b8b8"/><rect x="8" y="12" width="7" height="2" fill="#b8b8b8"/></svg><div class="ui" style="left:71px;top:963px;color:#a0a0a0">Очистить</div><div style="left:221px;top:958px;width:157px;height:19px;background:#f0f0f0;border:1px solid #adadad;border-bottom:none"></div><svg style="position:absolute;left:254px;top:962px;" width="17" height="16" viewBox="0 0 17 16"><circle cx="6.5" cy="4" r="3.6" fill="#2f6bc0"/><path d="M0 15 Q0 8.5 6.5 8.5 Q12 8.5 12 11 V15 Z" fill="#2f6bc0"/><path d="M13 9 V16 M9.5 12.5 H16.5" stroke="#22916a" stroke-width="2"/></svg><div class="ui" style="left:273px;top:963px;color:#000">Пользователи</div><div style="left:12px;top:982px;width:157px;height:22px;background:#f0f0f0;border:1px solid #d9d9d9"></div><svg style="position:absolute;left:15px;top:985px;" width="16" height="16" viewBox="0 0 16 16"><path d="M1 8 L9 4 L15 7 L15 13 L7 16 L1 13 Z" fill="#c0c0c0"/><path d="M9 2 L13 0 L15 3" stroke="#b0b0b0" stroke-width="1.5" fill="none"/></svg><div class="ui" style="left:35px;top:987px;color:#a0a0a0">Проверить оповещения</div><div style="left:221px;top:982px;width:157px;height:22px;background:#f0f0f0;border:1px solid #adadad"></div><svg style="position:absolute;left:249px;top:985px;" width="16" height="16" viewBox="0 0 16 16"><path d="M6 1.5 L14.5 0.5 V12 L6 14 Z" fill="#3a78d0" stroke="#1a3f80" stroke-width="0.8"/><path d="M14.5 0.5 L15.8 1.5 V12.8 L14.5 12" fill="#1a4a9a"/><path d="M1 7 L6 5 L11 7 V15 L6 16 L1 14.5 Z" fill="#f0a030" stroke="#a05010" stroke-width="0.6"/><path d="M3 12 L5 9 L7 11 L9 8" stroke="#d03020" stroke-width="1.3" fill="none"/></svg><div class="ui" style="left:269px;top:987px;color:#000">Показать отчет</div><div style="left:399px;top:90px;width:195px;height:25px;border:1px solid #bdbdbd;border-bottom:none"></div><div class="ui" style="left:402px;top:99px;color:#000;font-size:11.45px">Эффективность пользователей</div><svg style="position:absolute;left:580px;top:101px;" width="10" height="10" viewBox="0 0 10 10"><path d="M1 1 L9 9 M9 1 L1 9" stroke="#6a6a6a" stroke-width="1.6"/></svg><svg style="position:absolute;left:1892px;top:96px;" width="8" height="5" viewBox="0 0 8 5"><path d="M0 0 H8 L4 4.5 Z" fill="#6a6a6a"/></svg><svg style="position:absolute;left:1907px;top:95px;" width="9" height="8" viewBox="0 0 9 8"><path d="M0.8 0.5 L8.2 7.5 M8.2 0.5 L0.8 7.5" stroke="#555" stroke-width="1.5"/></svg><div style="left:924px;top:122px;font-size:13.7px;font-weight:bold;color:#444;line-height:16px">Эффективность пользователей за период с 01.01.2020 по 18.03.2020</div><div style="left:398px;top:143px;width:1521px;height:2px;background:#d4d0c8"></div><div style="left:398px;top:145px;width:1521px;height:1px;background:#fff"></div><div style="left:398px;top:145px;width:1px;height:856px;background:#fff"></div><div style="left:399px;top:146px;width:1520px;height:855px;background:#d4d0c8"></div><div style="left:1917px;top:146px;width:2px;height:855px;background:#404040"></div><div style="left:402px;top:149px;width:248px;height:852px;background:#fff;border:1px solid #7a7a7a;border-bottom:none"></div><div style="left:656px;top:149px;width:1243px;height:852px;background:#fff"></div><div style="left:875px;top:149px;width:2px;height:852px;background:#ffba2a"></div><div style="left:1671px;top:149px;width:2px;height:852px;background:#ffba2a"></div><div style="left:1899px;top:149px;width:16px;height:852px;background-color:#fff;background-image:repeating-conic-gradient(#d4d0c8 0 25%,#fff 0 50%);background-size:2px 2px"></div><div style="left:1899px;top:149px;width:16px;height:16px;background:#d4d0c8;box-shadow:inset 1px 1px 0 #fff,inset -1px -1px 0 #404040,inset -2px -2px 0 #808080"></div><svg style="position:absolute;left:1903px;top:154px;" width="8" height="5" viewBox="0 0 8 5"><path d="M0 5 L4 0.5 L8 5 Z" fill="#000"/></svg><div style="left:1899px;top:789px;width:16px;height:77px;background:#d4d0c8;box-shadow:inset 1px 1px 0 #fff,inset -1px -1px 0 #404040,inset -2px -2px 0 #808080"></div><div style="left:1899px;top:991px;width:16px;height:16px;background:#d4d0c8;box-shadow:inset 1px 1px 0 #fff,inset -1px -1px 0 #404040,inset -2px -2px 0 #808080"></div><svg style="position:absolute;left:1903px;top:996px;" width="8" height="5" viewBox="0 0 8 5"><path d="M0 0 L4 4.5 L8 0 Z" fill="#000"/></svg><svg style="position:absolute;left:416px;top:155px;" width="12" height="95" viewBox="0 0 12 95"><rect x="0" y="3" width="1" height="1" fill="#555"/><rect x="0" y="5" width="1" height="1" fill="#555"/><rect x="0" y="7" width="1" height="1" fill="#555"/><rect x="0" y="9" width="1" height="1" fill="#555"/><rect x="0" y="11" width="1" height="1" fill="#555"/><rect x="0" y="13" width="1" height="1" fill="#555"/><rect x="0" y="15" width="1" height="1" fill="#555"/><rect x="0" y="17" width="1" height="1" fill="#555"/><rect x="0" y="19" width="1" height="1" fill="#555"/><rect x="0" y="21" width="1" height="1" fill="#555"/><rect x="0" y="23" width="1" height="1" fill="#555"/><rect x="0" y="25" width="1" height="1" fill="#555"/><rect x="0" y="27" width="1" height="1" fill="#555"/><rect x="0" y="29" width="1" height="1" fill="#555"/><rect x="0" y="31" width="1" height="1" fill="#555"/><rect x="0" y="33" width="1" height="1" fill="#555"/><rect x="0" y="35" width="1" height="1" fill="#555"/><rect x="0" y="37" width="1" height="1" fill="#555"/><rect x="0" y="39" width="1" height="1" fill="#555"/><rect x="0" y="41" width="1" height="1" fill="#555"/><rect x="0" y="43" width="1" height="1" fill="#555"/><rect x="0" y="45" width="1" height="1" fill="#555"/><rect x="0" y="47" width="1" height="1" fill="#555"/><rect x="0" y="49" width="1" height="1" fill="#555"/><rect x="0" y="51" width="1" height="1" fill="#555"/><rect x="0" y="53" width="1" height="1" fill="#555"/><rect x="0" y="55" width="1" height="1" fill="#555"/><rect x="0" y="57" width="1" height="1" fill="#555"/><rect x="0" y="59" width="1" height="1" fill="#555"/><rect x="0" y="61" width="1" height="1" fill="#555"/><rect x="0" y="63" width="1" height="1" fill="#555"/><rect x="0" y="65" width="1" height="1" fill="#555"/><rect x="0" y="67" width="1" height="1" fill="#555"/><rect x="0" y="69" width="1" height="1" fill="#555"/><rect x="0" y="71" width="1" height="1" fill="#555"/><rect x="0" y="73" width="1" height="1" fill="#555"/><rect x="0" y="75" width="1" height="1" fill="#555"/><rect x="0" y="77" width="1" height="1" fill="#555"/><rect x="0" y="79" width="1" height="1" fill="#555"/><rect x="0" y="81" width="1" height="1" fill="#555"/><rect x="0" y="83" width="1" height="1" fill="#555"/><rect x="0" y="85" width="1" height="1" fill="#555"/><rect x="0" y="87" width="1" height="1" fill="#555"/><rect x="0" y="89" width="1" height="1" fill="#555"/><rect x="0" y="91" width="1" height="1" fill="#555"/><rect x="2" y="4" width="1" height="1" fill="#555"/><rect x="4" y="4" width="1" height="1" fill="#555"/><rect x="6" y="4" width="1" height="1" fill="#555"/><rect x="8" y="4" width="1" height="1" fill="#555"/><rect x="2" y="20" width="1" height="1" fill="#555"/><rect x="4" y="20" width="1" height="1" fill="#555"/><rect x="6" y="20" width="1" height="1" fill="#555"/><rect x="8" y="20" width="1" height="1" fill="#555"/><rect x="2" y="36" width="1" height="1" fill="#555"/><rect x="4" y="36" width="1" height="1" fill="#555"/><rect x="6" y="36" width="1" height="1" fill="#555"/><rect x="8" y="36" width="1" height="1" fill="#555"/><rect x="2" y="52" width="1" height="1" fill="#555"/><rect x="4" y="52" width="1" height="1" fill="#555"/><rect x="6" y="52" width="1" height="1" fill="#555"/><rect x="8" y="52" width="1" height="1" fill="#555"/><rect x="2" y="68" width="1" height="1" fill="#555"/><rect x="4" y="68" width="1" height="1" fill="#555"/><rect x="6" y="68" width="1" height="1" fill="#555"/><rect x="8" y="68" width="1" height="1" fill="#555"/><rect x="2" y="84" width="1" height="1" fill="#555"/><rect x="4" y="84" width="1" height="1" fill="#555"/><rect x="6" y="84" width="1" height="1" fill="#555"/><rect x="8" y="84" width="1" height="1" fill="#555"/></svg><div style="left:426px;top:231px;width:104px;height:16px;background:#d4d0c8"></div><div style="left:428px;top:155px;width:35px;height:8px;background:#9c9c9c;border-radius:3px;filter:blur(1.8px);opacity:.8"></div><div style="left:428px;top:171px;width:42px;height:8px;background:#9c9c9c;border-radius:3px;filter:blur(1.8px);opacity:.8"></div><div style="left:428px;top:187px;width:65px;height:8px;background:#9c9c9c;border-radius:3px;filter:blur(1.8px);opacity:.8"></div><div style="left:428px;top:203px;width:57px;height:8px;background:#9c9c9c;border-radius:3px;filter:blur(1.8px);opacity:.8"></div><div style="left:428px;top:219px;width:88px;height:8px;background:#9c9c9c;border-radius:3px;filter:blur(1.8px);opacity:.8"></div><div style="left:428px;top:235px;width:102px;height:8px;background:#9c9c9c;border-radius:3px;filter:blur(1.8px);opacity:.8"></div><div style="left:656px;top:149px;width:1243px;height:852px;overflow:hidden"><div style="left:219px;top:0px;width:2px;height:852px;background:#ffba2a"></div><div style="left:1015px;top:0px;width:2px;height:852px;background:#ffba2a"></div><div style="left:269px;top:-9px;font-size:16px;font-weight:bold;color:#000;line-height:20px">Эффективность пользователей (период: 01.01.2020-18.03.2020)</div><div style="left:263px;top:17px;width:155px;height:53px;background:#e3e3e3"></div><div style="left:258px;top:21px;font-family:'Liberation Serif',serif;width:165px;text-align:center;font-size:10.7px;line-height:9.6px;color:#000;letter-spacing:-0.2px">Пользователь</div><div style="left:421px;top:17px;width:53px;height:53px;background:#e3e3e3"></div><div style="left:416px;top:21px;font-family:'Liberation Serif',serif;width:63px;text-align:center;font-size:10.7px;line-height:9.6px;color:#000;letter-spacing:-0.2px">Эффектив
ность</div><div style="left:416px;top:51px;font-family:'Liberation Serif',serif;width:63px;text-align:center;font-size:11px;font-weight:bold;line-height:14px;color:#000">19%</div><div style="left:478px;top:17px;width:34px;height:53px;background:#e3e3e3"></div><div style="left:473px;top:21px;font-family:'Liberation Serif',serif;width:44px;text-align:center;font-size:10.7px;line-height:9.6px;color:#000;letter-spacing:-0.2px">Место</div><div style="left:473px;top:51px;font-family:'Liberation Serif',serif;width:44px;text-align:center;font-size:11px;font-weight:bold;line-height:14px;color:#000">4</div><div style="left:516px;top:17px;width:34px;height:53px;background:#e3e3e3"></div><div style="left:511px;top:21px;font-family:'Liberation Serif',serif;width:44px;text-align:center;font-size:10.7px;line-height:9.6px;color:#000;letter-spacing:-0.2px">Дней</div><div style="left:511px;top:51px;font-family:'Liberation Serif',serif;width:44px;text-align:center;font-size:11px;font-weight:bold;line-height:14px;color:#000">32</div><div style="left:554px;top:17px;width:45px;height:53px;background:#e3e3e3"></div><div style="left:549px;top:21px;font-family:'Liberation Serif',serif;width:55px;text-align:center;font-size:10.7px;line-height:9.6px;color:#000;letter-spacing:-0.2px">Начало
(ср.)</div><div style="left:549px;top:51px;font-family:'Liberation Serif',serif;width:55px;text-align:center;font-size:11px;font-weight:bold;line-height:14px;color:#000">12:05</div><div style="left:603px;top:17px;width:56px;height:53px;background:#e3e3e3"></div><div style="left:598px;top:21px;font-family:'Liberation Serif',serif;width:66px;text-align:center;font-size:10.7px;line-height:9.6px;color:#000;letter-spacing:-0.2px">Окончание
(ср.)</div><div style="left:598px;top:51px;font-family:'Liberation Serif',serif;width:66px;text-align:center;font-size:11px;font-weight:bold;line-height:14px;color:#000">16:03</div><div style="left:663px;top:17px;width:61px;height:53px;background:#e3e3e3"></div><div style="left:658px;top:21px;font-family:'Liberation Serif',serif;width:71px;text-align:center;font-size:10.7px;line-height:9.6px;color:#000;letter-spacing:-0.2px">Длительнос
ть (сум.)</div><div style="left:658px;top:51px;font-family:'Liberation Serif',serif;width:71px;text-align:center;font-size:11px;font-weight:bold;line-height:14px;color:#000">126:46</div><div style="left:727px;top:17px;width:57px;height:53px;background:#e3e3e3"></div><div style="left:722px;top:21px;font-family:'Liberation Serif',serif;width:67px;text-align:center;font-size:10.7px;line-height:9.6px;color:#000;letter-spacing:-0.2px">Активность
(сум.)</div><div style="left:722px;top:51px;font-family:'Liberation Serif',serif;width:67px;text-align:center;font-size:11px;font-weight:bold;line-height:14px;color:#000">26:31</div><div style="left:788px;top:17px;width:45px;height:53px;background:#e3e3e3"></div><div style="left:783px;top:21px;font-family:'Liberation Serif',serif;width:55px;text-align:center;font-size:10.7px;line-height:9.6px;color:#000;letter-spacing:-0.2px">Опоздан
ия</div><div style="left:783px;top:51px;font-family:'Liberation Serif',serif;width:55px;text-align:center;font-size:11px;font-weight:bold;line-height:14px;color:#c8473f">22</div><div style="left:837px;top:17px;width:42px;height:53px;background:#e3e3e3"></div><div style="left:832px;top:21px;font-family:'Liberation Serif',serif;width:52px;text-align:center;font-size:10.7px;line-height:9.6px;color:#000;letter-spacing:-0.2px">Ранние
уходы</div><div style="left:832px;top:51px;font-family:'Liberation Serif',serif;width:52px;text-align:center;font-size:11px;font-weight:bold;line-height:14px;color:#c8473f">18</div><div style="left:882px;top:17px;width:46px;height:53px;background:#e3e3e3"></div><div style="left:877px;top:21px;font-family:'Liberation Serif',serif;width:56px;text-align:center;font-size:10.7px;line-height:9.6px;color:#000;letter-spacing:-0.2px">Ранние
приходы</div><div style="left:877px;top:51px;font-family:'Liberation Serif',serif;width:56px;text-align:center;font-size:11px;font-weight:bold;line-height:14px;color:#3f9a8c">0</div><div style="left:932px;top:17px;width:41px;height:53px;background:#e3e3e3"></div><div style="left:927px;top:21px;font-family:'Liberation Serif',serif;width:51px;text-align:center;font-size:10.7px;line-height:9.6px;color:#000;letter-spacing:-0.2px">Поздние
уходы</div><div style="left:927px;top:51px;font-family:'Liberation Serif',serif;width:51px;text-align:center;font-size:11px;font-weight:bold;line-height:14px;color:#3f9a8c">4</div><div style="left:293px;top:53px;width:94px;height:11px;background:#a8a8ec;border-radius:6px;filter:blur(1.5px)"></div><div style="left:265px;top:71px;font-family:'Liberation Serif',serif;font-size:13.3px;font-weight:bold;color:#000;line-height:16px;letter-spacing:0.1px">Средняя активность пользователя</div><div style="left:263px;top:89px;width:705px;height:18px;background-color:#efefef;border:1px solid #000;background-image:radial-gradient(circle,rgba(0,0,0,.04) 0.6px,transparent 0.8px);background-size:4px 4px;"></div><div style="left:621px;top:90px;width:24px;height:18px;background-color:#4a86d0;background-image:radial-gradient(circle,rgba(0,0,0,.04) 0.6px,transparent 0.8px);background-size:4px 4px;"></div><div style="left:645px;top:90px;width:93px;height:18px;background-color:#8aaee2"></div><div style="left:263px;top:112px;width:10px;height:10px;background:#efefef;border:1px solid #000"></div><div style="left:280px;top:113px;font-family:'Liberation Serif',serif;font-size:9.3px;line-height:14px;color:#000">Начало рабочего дня: 12:05</div><div style="left:497px;top:112px;width:10px;height:10px;background:#4a86d0;border:1px solid #000"></div><div style="left:514px;top:113px;font-family:'Liberation Serif',serif;font-size:9.3px;line-height:14px;color:#000">Длительность/активность в течение рабочего дня: 3:57 (0:49)</div><div style="left:803px;top:112px;width:10px;height:10px;background:#efefef;border:1px solid #000"></div><div style="left:820px;top:113px;font-family:'Liberation Serif',serif;font-size:9.3px;line-height:14px;color:#000">Окончание рабочего дня: 16:03</div><div style="left:265px;top:128px;font-family:'Liberation Serif',serif;font-size:13.3px;font-weight:bold;color:#000;line-height:16px;letter-spacing:0.1px">Продуктивность пользователя</div><div style="left:263px;top:146px;width:709px;height:18px;background:#5f9ea0;border:1px solid #000"></div><div style="left:264px;top:147px;width:9px;height:18px;background:#fff;border-right:1px solid #000"></div><div style="left:274px;top:147px;width:455px;height:18px;background:#cd5c5c;border-right:1px solid #000"></div><div style="left:730px;top:147px;width:215px;height:18px;background:#fdbf64;border-right:1px solid #000"></div><div style="left:263px;top:169px;width:10px;height:10px;background:#fff;border:1px solid #000"></div><div style="left:280px;top:170px;font-family:'Liberation Serif',serif;font-size:9.3px;line-height:14px;color:#000">Не определено 1.40%</div><div style="left:370px;top:169px;width:10px;height:10px;background:#cd5c5c;border:1px solid #000"></div><div style="left:388px;top:170px;font-family:'Liberation Serif',serif;font-size:9.3px;line-height:14px;color:#000">Непродуктивно 64.22%</div><div style="left:486px;top:169px;width:10px;height:10px;background:#fdbf64;border:1px solid #000"></div><div style="left:503px;top:170px;font-family:'Liberation Serif',serif;font-size:9.3px;line-height:14px;color:#000">Нейтрально 30.47%</div><div style="left:587px;top:169px;width:10px;height:10px;background:#5f9ea0;border:1px solid #000"></div><div style="left:604px;top:170px;font-family:'Liberation Serif',serif;font-size:9.3px;line-height:14px;color:#000">Продуктивно 3.92%</div><div style="left:265px;top:185px;font-family:'Liberation Serif',serif;font-size:13.3px;font-weight:bold;color:#000;line-height:16px;letter-spacing:0.1px">Суммарная активность по группам процессов - 21:40</div><svg style="position:absolute;left:380px;top:225px;" width="212" height="212" viewBox="0 0 212 212"><path d="M105.5 105 L205.50 105.00 A100 100 0 0 1 205.40 109.52 Z" fill="#fdbf64" stroke="#000" stroke-width="1"/><path d="M105.5 105 L205.40 109.52 A100 100 0 0 1 202.91 127.61 Z" fill="#5f9ea0" stroke="#000" stroke-width="1"/><path d="M105.5 105 L202.91 127.61 A100 100 0 0 1 179.59 172.16 Z" fill="#fdbf64" stroke="#000" stroke-width="1"/><path d="M105.5 105 L179.59 172.16 A100 100 0 0 1 128.29 202.37 Z" fill="#fdbf64" stroke="#000" stroke-width="1"/><path d="M105.5 105 L128.29 202.37 A100 100 0 1 1 205.50 105.06 Z" fill="#cd5c5c" stroke="#000" stroke-width="1"/></svg><div style="left:712px;top:239px;font-size:11.1px;font-weight:bold;color:#000;line-height:14px">Топ 10 групп:</div><div style="left:713px;top:258px;width:10px;height:10px;background:#cd5c5c;border:1px solid #000"></div><div style="left:731px;top:256px;font-family:'Liberation Serif',serif;font-size:13.3px;line-height:16px;color:#000">Игры и развлечения (17:03)</div><div style="left:848px;top:256px;font-family:'Liberation Serif',serif;font-size:13.3px;line-height:16px;color:#000;width:100px;text-align:right">78,67 %</div><div style="left:713px;top:275px;width:10px;height:10px;background:#fdbf64;border:1px solid #000"></div><div style="left:731px;top:273px;font-family:'Liberation Serif',serif;font-size:13.3px;line-height:16px;color:#000">Файлы и диски (2:05)</div><div style="left:848px;top:273px;font-family:'Liberation Serif',serif;font-size:13.3px;line-height:16px;color:#000;width:100px;text-align:right">9,62 %</div><div style="left:713px;top:292px;width:10px;height:10px;background:#fdbf64;border:1px solid #000"></div><div style="left:731px;top:290px;font-family:'Liberation Serif',serif;font-size:13.3px;line-height:16px;color:#000">Системные (1:45)</div><div style="left:848px;top:290px;font-family:'Liberation Serif',serif;font-size:13.3px;line-height:16px;color:#000;width:100px;text-align:right">8,09 %</div><div style="left:713px;top:309px;width:10px;height:10px;background:#5f9ea0;border:1px solid #000"></div><div style="left:731px;top:307px;font-family:'Liberation Serif',serif;font-size:13.3px;line-height:16px;color:#000">Офисные (0:37)</div><div style="left:848px;top:307px;font-family:'Liberation Serif',serif;font-size:13.3px;line-height:16px;color:#000;width:100px;text-align:right">2,91 %</div><div style="left:713px;top:326px;width:10px;height:10px;background:#fdbf64;border:1px solid #000"></div><div style="left:731px;top:324px;font-family:'Liberation Serif',serif;font-size:13.3px;line-height:16px;color:#000">Браузеры (0:09)</div><div style="left:848px;top:324px;font-family:'Liberation Serif',serif;font-size:13.3px;line-height:16px;color:#000;width:100px;text-align:right">0,72 %</div><div style="left:265px;top:461px;font-family:'Liberation Serif',serif;font-size:13.3px;font-weight:bold;color:#000;line-height:16px;letter-spacing:0.1px">Суммарная активность по группам сайтов - 4:56</div><svg style="position:absolute;left:329px;top:500px;" width="212" height="212" viewBox="0 0 212 212"><path d="M105.5 105.3 L205.50 105.30 A100 100 0 0 1 205.50 106.12 Z" fill="#cd5c5c" stroke="#000" stroke-width="1"/><path d="M105.5 105.3 L205.50 106.12 A100 100 0 0 1 205.48 107.18 Z" fill="#cd5c5c" stroke="#000" stroke-width="1"/><path d="M105.5 105.3 L205.48 107.18 A100 100 0 0 1 205.34 111.01 Z" fill="#cd5c5c" stroke="#000" stroke-width="1"/><path d="M105.5 105.3 L205.34 111.01 A100 100 0 0 1 204.85 116.71 Z" fill="#fdbf64" stroke="#000" stroke-width="1"/><path d="M105.5 105.3 L204.85 116.71 A100 100 0 0 1 203.99 122.62 Z" fill="#fdbf64" stroke="#000" stroke-width="1"/><path d="M105.5 105.3 L203.99 122.62 A100 100 0 0 1 198.10 143.05 Z" fill="#5f9ea0" stroke="#000" stroke-width="1"/><path d="M105.5 105.3 L198.10 143.05 A100 100 0 0 1 182.11 169.57 Z" fill="#5f9ea0" stroke="#000" stroke-width="1"/><path d="M105.5 105.3 L182.11 169.57 A100 100 0 0 1 148.19 195.73 Z" fill="#fdbf64" stroke="#000" stroke-width="1"/><path d="M105.5 105.3 L148.19 195.73 A100 100 0 0 1 102.23 205.25 Z" fill="#fff" stroke="#000" stroke-width="1"/><path d="M105.5 105.3 L102.23 205.25 A100 100 0 1 1 205.50 105.36 Z" fill="#fdbf64" stroke="#000" stroke-width="1"/></svg><div style="left:611px;top:514px;font-size:11.1px;font-weight:bold;color:#000;line-height:14px">Топ 10 групп:</div><div style="left:612px;top:533px;width:10px;height:10px;background:#fdbf64;border:1px solid #000"></div><div style="left:630px;top:531px;font-family:'Liberation Serif',serif;font-size:13.3px;line-height:16px;color:#000">Запросы для поиска (3:41)</div><div style="left:848px;top:531px;font-family:'Liberation Serif',serif;font-size:13.3px;line-height:16px;color:#000;width:100px;text-align:right">74,49 %</div><div style="left:612px;top:550px;width:10px;height:10px;background:#fff;border:1px solid #000"></div><div style="left:630px;top:548px;font-family:'Liberation Serif',serif;font-size:13.3px;line-height:16px;color:#000">Неклассифицируемые (0:22)</div><div style="left:848px;top:548px;font-family:'Liberation Serif',serif;font-size:13.3px;line-height:16px;color:#000;width:100px;text-align:right">7,54 %</div><div style="left:612px;top:567px;width:10px;height:10px;background:#fdbf64;border:1px solid #000"></div><div style="left:630px;top:565px;font-family:'Liberation Serif',serif;font-size:13.3px;line-height:16px;color:#000">Системные страницы (0:20)</div><div style="left:848px;top:565px;font-family:'Liberation Serif',serif;font-size:13.3px;line-height:16px;color:#000;width:100px;text-align:right">6,87 %</div><div style="left:612px;top:584px;width:10px;height:10px;background:#5f9ea0;border:1px solid #000"></div><div style="left:630px;top:582px;font-family:'Liberation Serif',serif;font-size:13.3px;line-height:16px;color:#000">Локальные ресурсы (0:14)</div><div style="left:848px;top:582px;font-family:'Liberation Serif',serif;font-size:13.3px;line-height:16px;color:#000;width:100px;text-align:right">4,95 %</div><div style="left:612px;top:601px;width:10px;height:10px;background:#5f9ea0;border:1px solid #000"></div><div style="left:630px;top:599px;font-family:'Liberation Serif',serif;font-size:13.3px;line-height:16px;color:#000">Web почта (0:10)</div><div style="left:848px;top:599px;font-family:'Liberation Serif',serif;font-size:13.3px;line-height:16px;color:#000;width:100px;text-align:right">3,39 %</div><div style="left:612px;top:618px;width:10px;height:10px;background:#fdbf64;border:1px solid #000"></div><div style="left:630px;top:616px;font-family:'Liberation Serif',serif;font-size:13.3px;line-height:16px;color:#000">Поисковые сайты (0:02)</div><div style="left:848px;top:616px;font-family:'Liberation Serif',serif;font-size:13.3px;line-height:16px;color:#000;width:100px;text-align:right">0,95 %</div><div style="left:612px;top:635px;width:10px;height:10px;background:#fdbf64;border:1px solid #000"></div><div style="left:630px;top:633px;font-family:'Liberation Serif',serif;font-size:13.3px;line-height:16px;color:#000">Бесплатное и условно-бесплатное ПО (0:02)</div><div style="left:848px;top:633px;font-family:'Liberation Serif',serif;font-size:13.3px;line-height:16px;color:#000;width:100px;text-align:right">0,91 %</div><div style="left:612px;top:652px;width:10px;height:10px;background:#cd5c5c;border:1px solid #000"></div><div style="left:630px;top:650px;font-family:'Liberation Serif',serif;font-size:13.3px;line-height:16px;color:#000">Интернет-коммуникации (0:01)</div><div style="left:848px;top:650px;font-family:'Liberation Serif',serif;font-size:13.3px;line-height:16px;color:#000;width:100px;text-align:right">0,61 %</div><div style="left:612px;top:669px;width:10px;height:10px;background:#cd5c5c;border:1px solid #000"></div><div style="left:630px;top:667px;font-family:'Liberation Serif',serif;font-size:13.3px;line-height:16px;color:#000">Общество (30с)</div><div style="left:848px;top:667px;font-family:'Liberation Serif',serif;font-size:13.3px;line-height:16px;color:#000;width:100px;text-align:right">0,17 %</div><div style="left:612px;top:686px;width:10px;height:10px;background:#cd5c5c;border:1px solid #000"></div><div style="left:630px;top:684px;font-family:'Liberation Serif',serif;font-size:13.3px;line-height:16px;color:#000">Интернет-порталы (24с)</div><div style="left:848px;top:684px;font-family:'Liberation Serif',serif;font-size:13.3px;line-height:16px;color:#000;width:100px;text-align:right">0,13 %</div><div style="left:265px;top:736px;font-family:'Liberation Serif',serif;font-size:13.3px;font-weight:bold;color:#000;line-height:16px;letter-spacing:0.1px">ТОП 10 процессов</div><div style="left:624px;top:736px;font-family:'Liberation Serif',serif;font-size:13.3px;font-weight:bold;color:#000;line-height:16px;letter-spacing:0.1px">ТОП 10 сайтов</div><div style="left:263px;top:752px;width:348px;height:17px;background:#ebebeb;border:1px solid #a03020;border-width:2px 1px 2px 1px;box-sizing:border-box"></div><div style="left:503px;top:752px;width:1px;height:17px;background:#a03020"></div><div style="left:263px;top:755px;font-family:'Liberation Serif',serif;width:240px;text-align:center;font-size:13.3px;font-weight:bold;color:#8b1c1c;line-height:14px;letter-spacing:0.4px">Процесс</div><div style="left:503px;top:755px;font-family:'Liberation Serif',serif;width:108px;text-align:center;font-size:13.3px;font-weight:bold;color:#8b1c1c;line-height:14px;letter-spacing:0.4px">Длительность</div><div style="left:263px;top:769px;width:1px;height:90px;background:#000"></div><div style="left:503px;top:769px;width:1px;height:90px;background:#000"></div><div style="left:610px;top:769px;width:1px;height:90px;background:#000"></div><div style="left:266px;top:772px;width:79px;height:11px;background:#c0c0c0"></div><div style="left:345px;top:770px;font-size:10.7px;line-height:14px;color:#000">.exe</div><div style="left:403px;top:770px;font-size:10.7px;line-height:14px;color:#000;width:204px;text-align:right">9:57(47,62%)</div><div style="left:266px;top:788px;width:41px;height:11px;background:#c0c0c0"></div><div style="left:307px;top:786px;font-size:10.7px;line-height:14px;color:#000">.exe</div><div style="left:403px;top:786px;font-size:10.7px;line-height:14px;color:#000;width:204px;text-align:right">6:07(29,24%)</div><div style="left:268px;top:801px;font-size:10.7px;line-height:14px;color:#000;width:232px;overflow:hidden">Far.exe</div><div style="left:403px;top:801px;font-size:10.7px;line-height:14px;color:#000;width:204px;text-align:right">2:01(9,71%)</div><div style="left:268px;top:816px;font-size:10.7px;line-height:14px;color:#000;width:232px;overflow:hidden">explorer.exe</div><div style="left:403px;top:816px;font-size:10.7px;line-height:14px;color:#000;width:204px;text-align:right">1:19(6,35%)</div><div style="left:268px;top:831px;font-size:10.7px;line-height:14px;color:#000;width:232px;overflow:hidden">notepad.exe</div><div style="left:403px;top:831px;font-size:10.7px;line-height:14px;color:#000;width:204px;text-align:right">0:37(3,00%)</div><div style="left:268px;top:846px;font-size:10.7px;line-height:14px;color:#000;width:232px;overflow:hidden">game.exe</div><div style="left:403px;top:846px;font-size:10.7px;line-height:14px;color:#000;width:204px;text-align:right">0:21(1,68%)</div><div style="left:622px;top:752px;width:348px;height:17px;background:#ebebeb;border:1px solid #a03020;border-width:2px 1px 2px 1px;box-sizing:border-box"></div><div style="left:862px;top:752px;width:1px;height:17px;background:#a03020"></div><div style="left:622px;top:755px;font-family:'Liberation Serif',serif;width:240px;text-align:center;font-size:13.3px;font-weight:bold;color:#8b1c1c;line-height:14px;letter-spacing:0.4px">Сайт</div><div style="left:862px;top:755px;font-family:'Liberation Serif',serif;width:108px;text-align:center;font-size:13.3px;font-weight:bold;color:#8b1c1c;line-height:14px;letter-spacing:0.4px">Длительность</div><div style="left:622px;top:769px;width:1px;height:90px;background:#000"></div><div style="left:862px;top:769px;width:1px;height:90px;background:#000"></div><div style="left:969px;top:769px;width:1px;height:90px;background:#000"></div><div style="left:625px;top:772px;width:55px;height:11px;background:#c0c0c0"></div><div style="left:680px;top:770px;font-size:10.7px;line-height:14px;color:#000"></div><div style="left:762px;top:770px;font-size:10.7px;line-height:14px;color:#000;width:204px;text-align:right">3:39(75,98%)</div><div style="left:627px;top:786px;font-size:10.7px;line-height:14px;color:#000;width:232px;overflow:hidden">chrome-extension://oemmnddbldboiebfnladdacbdfmadadm</div><div style="left:762px;top:786px;font-size:10.7px;line-height:14px;color:#000;width:204px;text-align:right">0:19(6,77%)</div><div style="left:627px;top:801px;font-size:10.7px;line-height:14px;color:#000;width:232px;overflow:hidden">C:\</div><div style="left:762px;top:801px;font-size:10.7px;line-height:14px;color:#000;width:204px;text-align:right">0:14(5,09%)</div><div style="left:627px;top:816px;font-size:10.7px;line-height:14px;color:#000;width:232px;overflow:hidden">mail.google.com</div><div style="left:762px;top:816px;font-size:10.7px;line-height:14px;color:#000;width:204px;text-align:right">0:10(3,49%)</div><div style="left:627px;top:831px;font-size:10.7px;line-height:14px;color:#000;width:232px;overflow:hidden">127.0.0.1</div><div style="left:762px;top:831px;font-size:10.7px;line-height:14px;color:#000;width:204px;text-align:right">0:08(3,00%)</div><div style="left:625px;top:848px;width:92px;height:11px;background:#c0c0c0"></div><div style="left:717px;top:846px;font-size:10.7px;line-height:14px;color:#000"></div><div style="left:762px;top:846px;font-size:10.7px;line-height:14px;color:#000;width:204px;text-align:right">0:06(2,10%)</div></div><svg style="position:absolute;left:740px;top:460px;" width="30" height="30" viewBox="0 0 30 30"><path d="M14.5 23.5 L9.5 17.5 V15.5 L11 14.5 L13.5 16.3 M13 15.5 L11.5 11 L12.3 9.5 L14 9.3 L15.2 13.3 M15 10 L16.2 8.3 L18 8.3 L18.6 13.5 M18.5 9.2 H21 L21.6 14.2 M21.6 11.5 L23.2 11.6 L24.2 12.8 V15.8 L23.3 18.3 L22 20.5 L21.6 23.5" stroke="#000" stroke-width="1.1" fill="none" stroke-linejoin="round"/></svg></body></html>
